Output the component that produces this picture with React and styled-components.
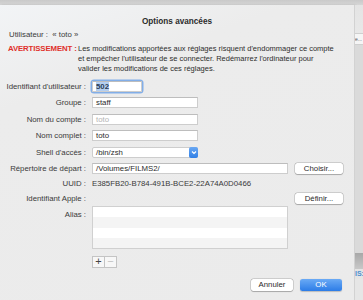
import React from 'react'
import styled, { createGlobalStyle } from 'styled-components'

const Global = createGlobalStyle`
  html, body {
    margin: 0;
    padding: 0;
    background: #d4d4d4;
  }
  body {
    font-family: "Liberation Sans", Arial, sans-serif;
    -webkit-font-smoothing: antialiased;
  }
`

const rows = [
  { label: "Identifiant d'utilisateur :", h: 16, kind: 'id', value: '502' },
  { label: 'Groupe :', h: 17, kind: 'field', value: 'staff' },
  { label: 'Nom du compte :', h: 16, kind: 'field', value: 'toto', dim: true },
  { label: 'Nom complet :', h: 17, kind: 'field', value: 'toto' },
  { label: "Shell d'accès :", h: 16, kind: 'popup', value: '/bin/zsh' },
  { label: 'Répertoire de départ :', h: 16, kind: 'wide', value: '/Volumes/FILMS2/', button: 'Choisir...' },
  { label: 'UUID :', h: 15, kind: 'text', value: 'E385FB20-B784-491B-BCE2-22A74A0D0466' },
  { label: 'Identifiant Apple :', h: 14, kind: 'none', button: 'Définir...' },
]

const warning = [
  "Les modifications apportées aux réglages risquent d'endommager ce compte",
  "et empêcher l'utilisateur de se connecter. Redémarrez l'ordinateur pour",
  'valider les modifications de ces réglages.',
]

function App() {
  return (
    <Page>
      <Global />
      <TopBand />
      <Row>
        <Sheet>
          <Title>Options avancées</Title>
          <UserLine>Utilisateur :&nbsp;&nbsp;« toto »</UserLine>
          <Warning>
            <WarnLabel>AVERTISSEMENT :</WarnLabel>
            <WarnText>
              {warning.map((line) => (
                <div key={line}>{line}</div>
              ))}
            </WarnText>
          </Warning>

          <Form>
            {rows.map((r) => (
              <FormRow key={r.label} $h={r.h}>
                <Label>{r.label}</Label>
                <Cell>
                  {r.kind === 'id' && (
                    <Focus>
                      <Field $w={50}><Selected>{r.value}</Selected></Field>
                    </Focus>
                  )}
                  {r.kind === 'field' && <Field $w={106} $dim={r.dim}>{r.value}</Field>}
                  {r.kind === 'popup' && (
                    <Popup>
                      <span>{r.value}</span>
                      <Arrow>
                        <svg width="6" height="5" viewBox="0 0 6 5">
                          <path d="M1 1.5 L3 3.5 L5 1.5" stroke="#fff" strokeWidth="1.1" fill="none" />
                        </svg>
                      </Arrow>
                    </Popup>
                  )}
                  {r.kind === 'wide' && <Field $w={196}>{r.value}</Field>}
                  {r.kind === 'text' && <Plain>{r.value}</Plain>}
                  {r.kind === 'none' && <Spacer />}
                  {r.button && <Button>{r.button}</Button>}
                </Cell>
              </FormRow>
            ))}
            <AliasRow>
              <Label>Alias :</Label>
              <AliasBox>
                <Stripe />
                <Stripe $alt />
                <Stripe />
                <Stripe $alt />
              </AliasBox>
            </AliasRow>
            <PlusRow>
              <SegBtn>+</SegBtn>
              <SegBtn $off>−</SegBtn>
            </PlusRow>
          </Form>

          <Footer>
            <Button $w={42}>Annuler</Button>
            <Primary>OK</Primary>
          </Footer>
        </Sheet>
        <Strip>
          <StripTop />
          <StripBtn>e...</StripBtn>
          <StripMid />
          <StripDark />
          <StripText>IS:</StripText>
          <StripBottom />
        </Strip>
      </Row>
    </Page>
  )
}

export default App

const Page = styled.div`
  width: 363px;
  height: 300px;
  overflow: hidden;
  display: flex;
  flex-direction: column;
`

const TopBand = styled.div`
  height: 5px;
  background: linear-gradient(#c9c9c9, #d6d6d6);
`

const Row = styled.div`
  flex: 1;
  display: flex;
`

const Sheet = styled.div`
  width: 355px;
  box-sizing: border-box;
  background: linear-gradient(160deg, #f2f4f6 0%, #ececec 25%, #ebebeb 100%);
  border-right: 1px solid #d2d2d2;
  box-shadow: 1px 0 2px rgba(0, 0, 0, 0.12);
  color: #2b2b2b;
  font-size: 7.8px;
  padding: 12px 0 0 0;
  display: flex;
  flex-direction: column;
`

const Title = styled.div`
  text-align: center;
  font-weight: bold;
  font-size: 8.2px;
  line-height: 10px;
  height: 11px;
`

const UserLine = styled.div`
  padding-left: 9px;
  line-height: 10px;
  margin-top: 2px;
  color: #3a3a3a;
`

const Warning = styled.div`
  display: flex;
  margin-top: 4px;
  padding-left: 8px;
  line-height: 10px;
`

const WarnLabel = styled.div`
  color: #e0312b;
  font-weight: bold;
  width: 70px;
  flex: none;
  white-space: nowrap;
  letter-spacing: -0.12px;
`

const WarnText = styled.div`
  color: #2e2e2e;
  font-size: 7.5px;
  white-space: nowrap;
`

const Form = styled.div`
  margin-top: 4px;
  display: flex;
  flex-direction: column;
`

const FormRow = styled.div`
  display: flex;
  align-items: center;
  height: ${(p) => p.$h}px;
`

const Label = styled.div`
  width: 89px;
  flex: none;
  text-align: right;
  padding-right: 3px;
  box-sizing: border-box;
  color: #3a3a3a;
  white-space: nowrap;
`

const Cell = styled.div`
  display: flex;
  align-items: center;
  padding-left: 3px;
`

const Field = styled.div`
  width: ${(p) => p.$w}px;
  height: 11px;
  box-sizing: border-box;
  background: #fff;
  border: 1px solid #cdcdcd;
  border-top-color: #bdbdbd;
  padding-left: 3px;
  line-height: 9px;
  color: ${(p) => (p.$dim ? '#b4b4b4' : '#2b2b2b')};
`

const Focus = styled.div`
  border-radius: 2px;
  box-shadow: 0 0 0 1.5px #82aee8;
`

const Selected = styled.span`
  background: #b4cff1;
  font-weight: bold;
  color: #2b3d57;
`

const Popup = styled.div`
  width: 106px;
  height: 11px;
  box-sizing: border-box;
  background: #fff;
  border: 1px solid #cdcdcd;
  border-radius: 2px;
  display: flex;
  align-items: center;
  justify-content: space-between;
  padding-left: 3px;
`

const Arrow = styled.div`
  width: 9px;
  height: 11px;
  margin-right: -1px;
  border-radius: 2px;
  background: linear-gradient(#6aa8f3, #2f7fe6);
  display: flex;
  align-items: center;
  justify-content: center;
`

const Plain = styled.div`
  color: #3a3a3a;
`

const Spacer = styled.div`
  width: 196px;
`

const Button = styled.div`
  width: ${(p) => p.$w || 48}px;
  height: 11px;
  margin-left: ${(p) => (p.$w ? 0 : 7)}px;
  box-sizing: border-box;
  background: #fff;
  border-radius: 2.5px;
  box-shadow: 0 0 0 0.5px rgba(0, 0, 0, 0.22), 0 0.5px 1px rgba(0, 0, 0, 0.2);
  text-align: center;
  line-height: 11px;
  color: #2b2b2b;
`

const AliasRow = styled.div`
  display: flex;
  align-items: flex-start;
  margin-top: 1px;
  & > div:first-child {
    margin-top: 4px;
  }
`

const AliasBox = styled.div`
  width: 196px;
  height: 43px;
  margin-left: 3px;
  box-sizing: border-box;
  border: 1px solid #d0d0d0;
  background: #fff;
  display: flex;
  flex-direction: column;
`

const Stripe = styled.div`
  flex: 1;
  background: ${(p) => (p.$alt ? '#f4f4f4' : '#ffffff')};
`

const PlusRow = styled.div`
  display: flex;
  margin: 7px 0 0 92px;
`

const SegBtn = styled.div`
  width: 13px;
  height: 12px;
  box-sizing: border-box;
  border: 1px solid #c4c4c4;
  margin-left: ${(p) => (p.$off ? '-1px' : '0')};
  background: #f7f7f7;
  color: ${(p) => (p.$off ? '#c2c2c2' : '#444')};
  font-size: 11px;
  line-height: 9px;
  text-align: center;
`

const Footer = styled.div`
  display: flex;
  justify-content: flex-end;
  gap: 7px;
  padding-right: 12px;
  margin-top: 11px;
  & > div {
    height: 12px;
    line-height: 12px;
  }
`

const Primary = styled.div`
  width: 42px;
  border-radius: 2.5px;
  background: linear-gradient(#6aaaf5, #2c7ce7);
  color: #fff;
  text-align: center;
  box-shadow: 0 0.5px 1px rgba(0, 0, 0, 0.2);
`

const Strip = styled.div`
  flex: 1;
  display: flex;
  flex-direction: column;
  background: #dedede;
  font-size: 5px;
  overflow: hidden;
`

const StripTop = styled.div`
  height: 28px;
  background: linear-gradient(#e4e4e4, #e8e8e8);
`

const StripBtn = styled.div`
  height: 10px;
  background: #f5f5f5;
  border-top: 1px solid #cfcfcf;
  border-bottom: 1px solid #cfcfcf;
  color: #555;
  line-height: 10px;
  white-space: nowrap;
`

const StripMid = styled.div`
  height: 208px;
  background: #dadada;
`

const StripDark = styled.div`
  height: 16px;
  background: linear-gradient(#a8a8a8, #c8c8c8);
`

const StripText = styled.div`
  height: 10px;
  line-height: 10px;
  color: #4d8fd0;
  font-weight: bold;
  font-size: 7px;
  background: #e4e4e4;
`

const StripBottom = styled.div`
  flex: 1;
  background: #e6e6e6;
`
